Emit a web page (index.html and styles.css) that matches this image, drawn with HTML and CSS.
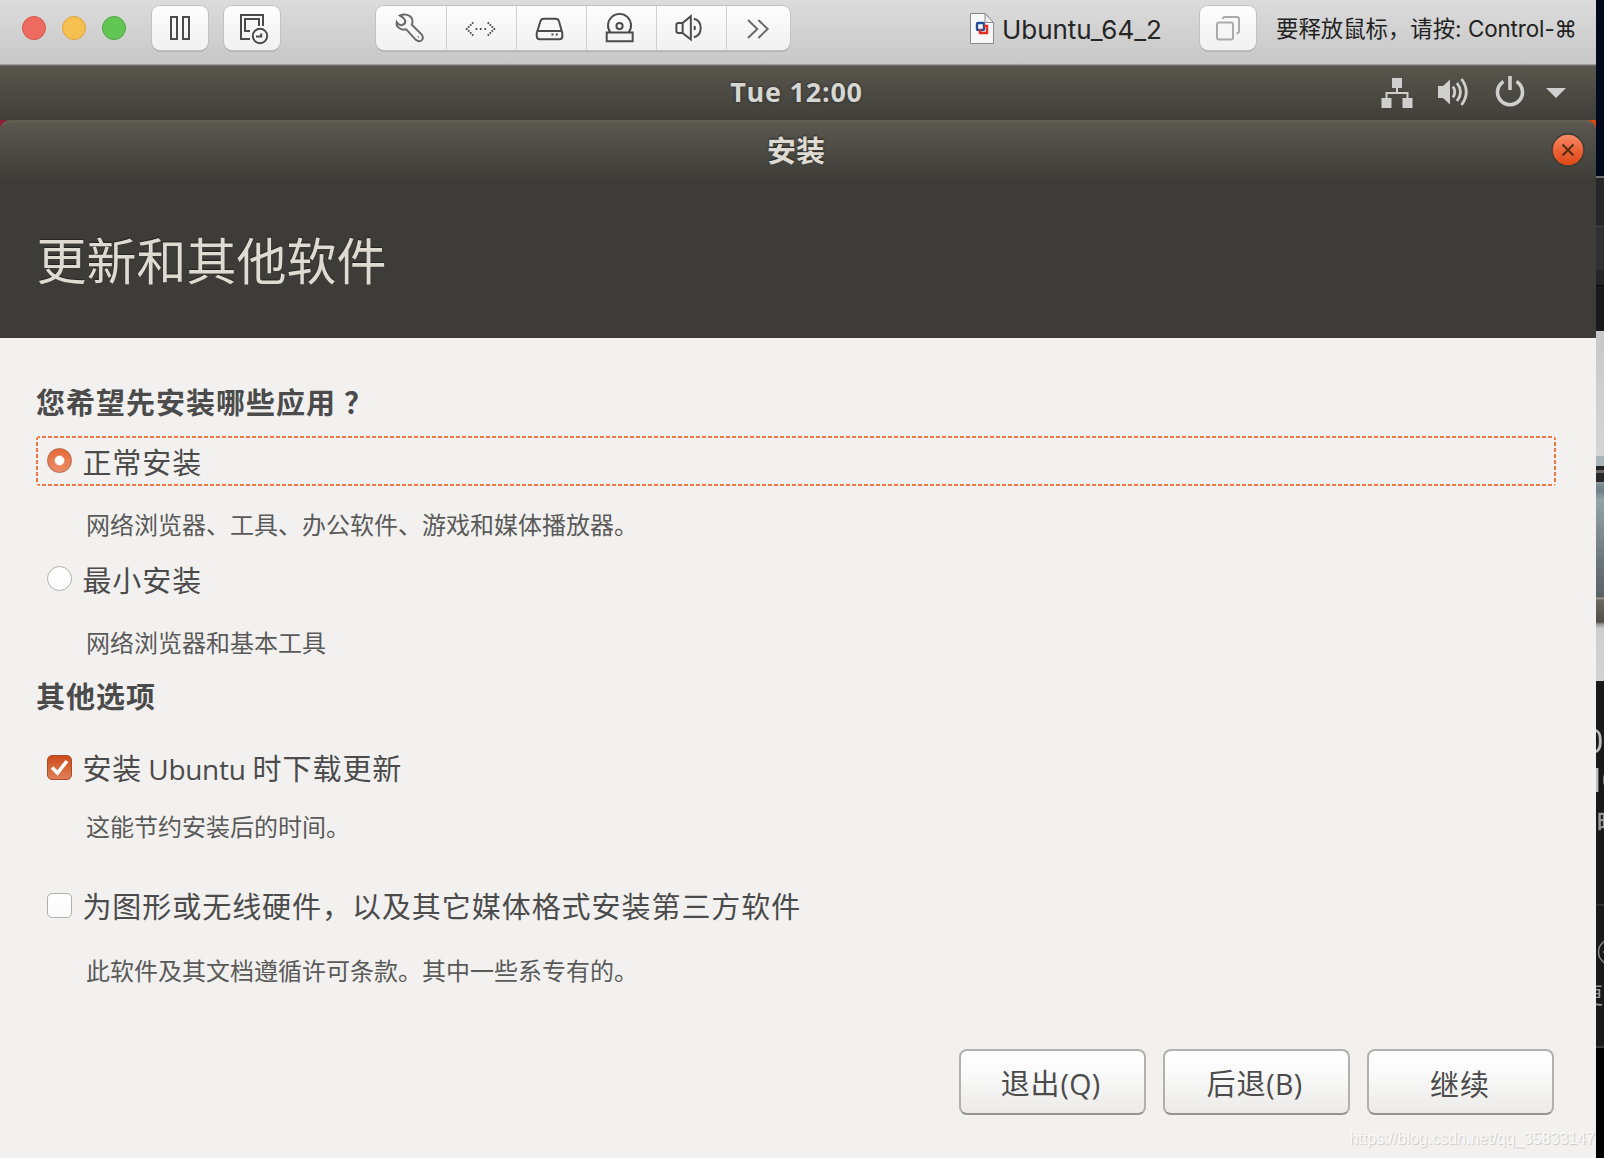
FILE: index.html
```html
<!DOCTYPE html>
<html lang="zh-CN">
<head>
<meta charset="utf-8">
<title>Ubuntu_64_2</title>
<link rel="stylesheet" href="styles.css">
</head>
<body>
<div class="screen">
  <main class="vm">
    <header class="toolbar">
      <div class="lights"><i class="light red"></i><i class="light yellow"></i><i class="light green"></i></div>
      <button class="tool pause"><svg width="56" height="44" viewBox="152 6 56 44"><path d="M171 17h6v22h-6zM183 17h6v22h-6z"/></svg></button>
      <button class="tool snap"><svg width="56" height="44" viewBox="224 6 56 44"><path d="M250 39h-9V15h22v11M250 31h-5V19h14v7"/><circle cx="260" cy="36" r="7.2"/><path d="M256 36.5h5.2v-3"/></svg></button>
      <div class="segments">
        <svg class="seg first thin" viewBox="376 6 71 44"><g transform="translate(370 0) scale(.33333)"><path d="M91 46Q106 39 120 47Q134 57 127 74L158 105Q164 115 156 122Q148 127 139 120L110 88Q96 92 86 82Q79 76 81 66Q88 77 97 75Q108 72 107 62Q104 53 91 46Z"/><path d="M145 111h3"/></g></svg>
        <svg class="seg" viewBox="447 6 70 44"><g transform="translate(370 0) scale(.33333)"><path stroke-dasharray="5 3.6" d="M311 67L291 87L311 107M355 67L375 87L355 107M318 87h5M331 87h5M345 87h5"/></g></svg>
        <svg class="seg" viewBox="517 6 70 44"><g transform="translate(370 0) scale(.33333)"><path d="M523 56H558Q567 56 569 64L579 100V108Q579 118 570 118H511Q501 118 501 108V100L512 64Q514 56 523 56ZM502 93H578M546 104h6M559 104h6"/></g></svg>
        <svg class="seg" viewBox="587 6 70 44"><g transform="translate(370 0) scale(.33333)"><path d="M722 97A35 35 0 1 1 778 97M711 98H790V124H711Z"/><circle cx="750" cy="78" r="9.5"/></g></svg>
        <svg class="seg" viewBox="657 6 70 44"><g transform="translate(370 0) scale(.33333)"><path d="M938 69H926Q920 69 920 75V93Q920 99 926 99H938M939 69V99L964 119V48ZM973 56Q994 61 994 84Q994 107 973 112M974 78Q979 84 974 90"/></g></svg>
        <svg class="seg last thin" viewBox="727 6 63 44"><g transform="translate(370 0) scale(.33333)"><path d="M1134 60L1162 87L1134 114M1165 60L1193 87L1165 114"/></g></svg>
      </div>
      <svg class="doc" width="26" height="33" viewBox="969 12 26 33"><path d="M970.5 13.5H985L993.500 23V43.500H970.500Z" fill="#f8f8f8" stroke="#888"/><path d="M985 13.500V22.500H993.500Z" fill="#eee" stroke="#888"/><rect x="977" y="23" width="7" height="7" rx="1" fill="none" stroke="#234f9c" stroke-width="2.4"/><path d="M984 26H987V33H980V29" fill="none" stroke="#e62d22" stroke-width="2.4"/></svg>
      <span class="vm-name">Ubuntu_64_2</span>
      <button class="tool copy"><svg width="56" height="44" viewBox="1200 6 56 44"><rect x="1217" y="22.500" width="16" height="17" rx="2"/><path d="M1223 19V18.500Q1223 17 1225 17H1237Q1239 17 1239 19V31Q1239 33 1236.500 33.500"/></svg></button>
      <span class="hint">要释放鼠标，请按: <span class="hint-key">Control-⌘</span></span>
    </header>

    <div class="panel">
      <span class="clock">Tue 12:00</span>
      <svg class="tray" width="190" height="36" viewBox="1380 74 190 36">
        <path d="M1392 78h10v10h-4v4h10.500v6h4v10h-10V98h4v-4h-19v4h4v10h-10V98h4v-6H1396v-4h-4z"/>
        <path d="M1438 86h5l7-6.500v25l-7-6.500h-5z"/>
        <path class="line" d="M1453 86.500q3.500 5.500 0 11M1457 83q7 9 0 18M1461.500 79q9.500 13 0 26"/>
        <path class="power" d="M1503.500 81.500A12.500 12.500 0 1 0 1516.500 81.500M1510 76v14"/>
        <path d="M1546 88h20l-10 10z"/>
      </svg>
    </div>

    <section class="installer">
      <div class="corners">
        <div class="titlebar">
          <span>安装</span>
          <svg class="close" width="34" height="34" viewBox="0 0 34 34"><defs><linearGradient id="og" x1="0" y1="0" x2="0" y2="1"><stop offset="0" stop-color="#f58b69"/><stop offset=".5" stop-color="#ee6237"/><stop offset="1" stop-color="#de4814"/></linearGradient></defs><circle cx="17" cy="17" r="16" fill="url(#og)" stroke="#3b3a35" stroke-width="1.500"/><path d="M11.500 11.500l11 11M22.500 11.500l-11 11" stroke="#4d2e14" stroke-width="2"/></svg>
        </div>
      </div>
      <h1>更新和其他软件</h1>
      <div class="content">
        <h2>您希望先安装哪些应用<span class="qm">？</span></h2>
        <label class="choice focused"><i class="radio on"></i><span>正常安装</span></label>
        <p class="note n1">网络浏览器、工具、办公软件、游戏和媒体播放器。</p>
        <label class="choice c2"><i class="radio"></i><span>最小安装</span></label>
        <p class="note n2">网络浏览器和基本工具</p>
        <h2 class="other">其他选项</h2>
        <label class="choice c3"><i class="check on"><svg width="25" height="25" viewBox="0 0 25 25"><path d="M5 12.500L10.500 18L20 6"/></svg></i><span>安装<span class="latin">Ubuntu</span>时下载更新</span></label>
        <p class="note n3">这能节约安装后的时间。</p>
        <label class="choice c4"><i class="check"></i><span>为图形或无线硬件，以及其它媒体格式安装第三方软件</span></label>
        <p class="note n4">此软件及其文档遵循许可条款。其中一些系专有的。</p>
        <div class="actions"><button>退出<span>(Q)</span></button><button>后退<span>(B)</span></button><button>继续</button></div>
      </div>
    </section>
  </main>
  <aside class="desktop">
    <span class="frag digit">0</span>
    <span class="frag digits">10</span>
    <span class="frag shi">時</span>
    <svg class="frag ring" width="28" height="28" viewBox="0 0 28 28"><circle cx="14" cy="14" r="12.500"/><path d="M6 14h8"/></svg>
    <span class="frag geng">更</span>
  </aside>
  <div class="watermark">https://blog.csdn.net/qq_35833147</div>
</div>
</body>
</html>
```
FILE: styles.css
```css
* { box-sizing: border-box; }
body { margin: 0; font-family: "Open Sans", "Noto Sans CJK SC", sans-serif; color: #4b4b4b; }
h1, h2, p { margin: 0; font-weight: 400; }
button { font: inherit; color: inherit; padding: 0; border: 0; }
svg { display: block; }
.screen { position: relative; display: flex; width: 1604px; height: 1158px; overflow: hidden; white-space: nowrap; }
.vm { width: 1596px; flex: none; background: #f2f1ef; }

/* host window toolbar */
.toolbar { display: flex; height: 66px; padding-top: 6px; align-items: flex-start; background: linear-gradient(#dcdcdc, #c7c7c7); border-bottom: 1px solid #6d6d69; box-shadow: inset 0 -1px #9b9b9b; }
.lights { display: flex; gap: 16px; margin: 10px 26px 0 22px; }
.light { width: 24px; height: 24px; border-radius: 50%; border: 1px solid; }
.red { background: #ed6b60; border-color: #d75549; }
.yellow { background: #f5c04f; border-color: #dba33c; }
.green { background: #62c655; border-color: #4aa73d; }
.tool, .segments { flex: none; height: 44px; border-radius: 8px; background: linear-gradient(#fdfdfd, #f1f1f1); box-shadow: 0 0 0 1px #c2c2c2, 0 1.5px 0 #989898; }
.tool { width: 56px; }
.toolbar .tool svg, .seg { fill: none; stroke: #4b4b4b; stroke-width: 2; }
.snap { margin-left: 16px; }
.segments { display: flex; width: 414px; margin-left: 96px; }
.toolbar .seg { width: 70px; height: 44px; border-right: 1px solid #d0d0d0; stroke-width: 6; }
.toolbar .seg.first { width: 71px; }
.toolbar .seg.last { width: 63px; border: 0; }
.toolbar .seg.thin { stroke: #6a6a6a; stroke-width: 6; }
.doc { flex: none; margin: 6px 0 0 179px; }
.vm-name { width: 197px; margin: 4px 0 0 7px; font: 26px/40px Inter, sans-serif; letter-spacing: -.05px; color: #252525; }
.copy { margin-left: 1px; }
.toolbar .copy svg { stroke: #aaa; }
.hint { margin: 3px 0 0 20px; font: 22.4px/40px Inter, "Noto Sans CJK SC", sans-serif; color: #222; }
.hint-key { letter-spacing: -.1px; }

/* guest desktop panel */
.panel { position: relative; display: flex; justify-content: center; height: 54px; padding-right: 3px; background: linear-gradient(#58554c, #403f3a); }
.clock { font-weight: 700; font-size: 27px; line-height: 52px; letter-spacing: .75px; color: #d6d6d2; text-shadow: 0 0 3px #222; }
.tray { position: absolute; right: 26px; top: 8px; fill: #cfcfcd; }
.tray .line, .tray .power { fill: none; stroke: #cfcfcd; stroke-width: 2.8; }
.tray .power { stroke-width: 3.6; }

/* installer window */
.corners { background: linear-gradient(90deg, #8a1e3a 50%, #d9480f 50%); }
.titlebar { position: relative; display: flex; justify-content: center; height: 59px; padding-right: 4px; border-radius: 10px 10px 0 0; border-top: 3px solid #615f52; background: linear-gradient(#5a574f, #3f3e39); font: 700 29px/52px "Noto Sans CJK SC", sans-serif; color: #dfdbd2; text-shadow: 0 -1px 2px #222; }
.close { position: absolute; right: 11px; top: 10px; }
h1 { height: 159px; padding: 43px 0 0 36.5px; background: #3d3c38; color: #dfdbd2; font: 50px/72px "Noto Sans CJK SC", sans-serif; text-shadow: 0 -1px 1px #222; }
.content { height: 820px; padding: 43px 40px 0 36px; }
h2 { height: 40px; font: 700 29px/40px "Noto Sans CJK SC", sans-serif; letter-spacing: 1px; }
.qm { margin-left: 8px; }
.choice { display: flex; height: 50px; padding-left: 11.4px; align-items: flex-start; font: 29px/50px "Noto Sans CJK SC", sans-serif; letter-spacing: .95px; }
.choice > i { flex: none; width: 25px; height: 25px; margin: 12px 10px 0 0; border: 1px solid #b4b0ab; background: linear-gradient(#fff, #fbfbfb); }
.focused { position: relative; width: 1520px; margin-top: 15px; }
/* focus ring: 4px dashes with 2px gaps on each side */
.focused::before {
  content: ""; position: absolute; inset: 0; border-radius: 4px;
  background:
    repeating-linear-gradient(90deg, #f07746 0 4px, transparent 4px 6px) 0 0 / 100% 2px no-repeat,
    repeating-linear-gradient(90deg, #f07746 0 4px, transparent 4px 6px) 0 100% / 100% 2px no-repeat,
    repeating-linear-gradient(#f07746 0 4px, transparent 4px 6px) 0 0 / 2px 100% no-repeat,
    repeating-linear-gradient(#f07746 0 4px, transparent 4px 6px) 100% 0 / 2px 100% no-repeat;
}
.radio { border-radius: 50%; }
.choice > .radio.on { border-color: #b7684a; background: radial-gradient(circle, #fff 4px, transparent 5.5px), linear-gradient(#e76a37, #ea8d69); }
.choice > .check { border-radius: 5px; }
.choice > .check.on { border-color: #a94d2b; background: linear-gradient(#cf4c1b, #df8058); }
.check svg { margin: -1px; fill: none; stroke: #fff; stroke-width: 3.6; }
.note { height: 40px; padding-left: 50px; font: 24px/40px "Noto Sans CJK SC", sans-serif; color: #5a5a59; }
.n1 { margin-top: 18px; }
.c2 { margin-top: 10px; }
.n2 { margin-top: 18px; }
.other { margin-top: 13px; }
.c3 { margin-top: 28px; }
.c3 > span, .c4 > span { margin-top: -1px; }
.n3 { margin-top: 13px; }
.c4 { margin-top: 35px; }
.n4 { margin-top: 19px; }
.latin { font-family: "Open Sans", sans-serif; font-size: 28px; margin: 0 7px 0 6px; letter-spacing: -.3px; }
.actions { display: flex; justify-content: flex-end; gap: 17px; margin-top: 59px; padding-right: 2px; }
.actions button { width: 187px; height: 66px; padding: 1px 4px 0 0; border: 2px solid #b2b1af; border-bottom-color: #949391; border-radius: 8px; background: linear-gradient(#fff, #f9f9f9 40%, #ebeae8); font: 29px/60px "Noto Sans CJK SC", sans-serif; letter-spacing: .9px; }
.actions button:last-child { padding-right: 1px; }
.actions span { font-family: "Open Sans", sans-serif; font-size: 28.5px; letter-spacing: .3px; }

/* sliver of the host desktop to the right of the window */
.desktop { position: relative; width: 8px; overflow: hidden; background: linear-gradient(#010a1d 0 176px, #707070 176px 178px, #262626 178px 226px, #464646 226px 227px, #303031 227px 270px, #252525 270px 285px, #000 285px 286px, #191919 286px 331px, #c8c8c8 331px, #d5d5d5 456px, #a8b6ba 456px 466px, #222 466px 470px, #686868 470px 473px, #282828 473px 482px, #87969b 482px, #6d7d83 490px, #93a3a8 500px, #6b777b 560px, #596164 597px, #aaa69f 598px, #6b6864 600px, #514e4a 622px, #969696 624px, #cfcfcf 629px, #d2d2d2 681px, #191919 681px 904px, #303030 904px 906px, #191919 906px 1046px, #3b3b3b 1046px 1048px, #000 1048px); }
.frag { position: absolute; font: 32px/32px "Noto Sans", sans-serif; color: #bdbdbd; will-change: transform; }
.digit { left: -11px; top: 725px; }
.digits { left: -9.5px; top: 764px; letter-spacing: -3.5px; }
.shi { left: 1px; top: 809px; font: 700 22px/22px "Noto Sans CJK SC", sans-serif; color: #999; }
.ring { left: 1px; top: 938px; fill: none; stroke: #888; stroke-width: 1.5; }
.geng { left: -15px; top: 982px; font: 22px/22px "Noto Sans CJK SC", sans-serif; color: #999; }
.watermark { position: absolute; right: 9px; top: 1129px; font: 16px/20px "Liberation Sans", sans-serif; color: #fafafa; text-shadow: 1px 1px 1px #c6c6c6; }
```
